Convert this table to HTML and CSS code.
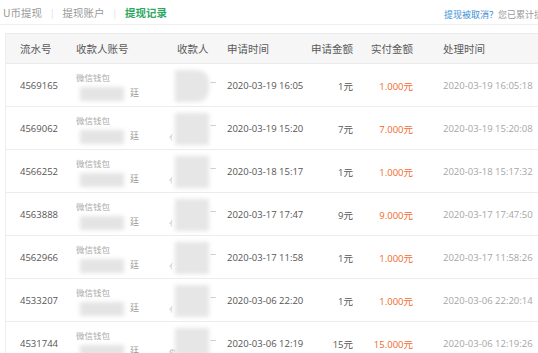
FILE: index.html
```html
<!DOCTYPE html>
<html lang="zh">
<head>
<meta charset="utf-8">
<link rel="stylesheet" href="styles.css">
</head>
<body>
<div class="page">
  <div class="tabs">
    <div class="tablist">
      <span class="tab">U币提现</span><span class="sep">|</span>
      <span class="tab">提现账户</span><span class="sep">|</span>
      <span class="tab active">提现记录</span>
    </div>
    <div class="note"><span class="link">提现被取消？</span>您已累计提现</div>
  </div>
  <div class="table">
    <div class="row head">
      <div class="c c1">流水号</div>
      <div class="c c2">收款人账号</div>
      <div class="c c3">收款人</div>
      <div class="c c4">申请时间</div>
      <div class="c c5">申请金额</div>
      <div class="c c6">实付金额</div>
      <div class="c c7">处理时间</div>
    </div>

    <div class="row">
      <div class="c c1 num">4569165</div>
      <div class="c c2 acct"><span class="wx">微信钱包</span><span class="l2"><span class="blob b1"></span><span class="ch">廷</span></span></div>
      <div class="c c3 name"><span class="blob b2 big"></span><span class="dash">—</span></div>
      <div class="c c4 num">2020-03-19 16:05</div>
      <div class="c c5 num">1元</div>
      <div class="c c6 num paid">1.000元</div>
      <div class="c c7 num done">2020-03-19 16:05:18</div>
    </div>
    <div class="row">
      <div class="c c1 num">4569062</div>
      <div class="c c2 acct"><span class="wx">微信钱包</span><span class="l2"><span class="blob b1"></span><span class="ch">廷</span></span></div>
      <div class="c c3 name"><span class="tiny">亻</span><span class="blob b2"></span><span class="dash">—</span></div>
      <div class="c c4 num">2020-03-19 15:20</div>
      <div class="c c5 num">7元</div>
      <div class="c c6 num paid">7.000元</div>
      <div class="c c7 num done">2020-03-19 15:20:08</div>
    </div>
    <div class="row">
      <div class="c c1 num">4566252</div>
      <div class="c c2 acct"><span class="wx">微信钱包</span><span class="l2"><span class="blob b1"></span><span class="ch">廷</span></span></div>
      <div class="c c3 name"><span class="tiny">亻</span><span class="blob b2"></span><span class="dash">—</span></div>
      <div class="c c4 num">2020-03-18 15:17</div>
      <div class="c c5 num">1元</div>
      <div class="c c6 num paid">1.000元</div>
      <div class="c c7 num done">2020-03-18 15:17:32</div>
    </div>
    <div class="row">
      <div class="c c1 num">4563888</div>
      <div class="c c2 acct"><span class="wx">微信钱包</span><span class="l2"><span class="blob b1"></span><span class="ch">廷</span></span></div>
      <div class="c c3 name"><span class="tiny">亻</span><span class="blob b2"></span><span class="dash">—</span></div>
      <div class="c c4 num">2020-03-17 17:47</div>
      <div class="c c5 num">9元</div>
      <div class="c c6 num paid">9.000元</div>
      <div class="c c7 num done">2020-03-17 17:47:50</div>
    </div>
    <div class="row">
      <div class="c c1 num">4562966</div>
      <div class="c c2 acct"><span class="wx">微信钱包</span><span class="l2"><span class="blob b1"></span><span class="ch">廷</span></span></div>
      <div class="c c3 name"><span class="tiny">亻</span><span class="blob b2"></span><span class="dash">—</span></div>
      <div class="c c4 num">2020-03-17 11:58</div>
      <div class="c c5 num">1元</div>
      <div class="c c6 num paid">1.000元</div>
      <div class="c c7 num done">2020-03-17 11:58:26</div>
    </div>
    <div class="row">
      <div class="c c1 num">4533207</div>
      <div class="c c2 acct"><span class="wx">微信钱包</span><span class="l2"><span class="blob b1"></span><span class="ch">廷</span></span></div>
      <div class="c c3 name"><span class="tiny">亻</span><span class="blob b2"></span><span class="dash">—</span></div>
      <div class="c c4 num">2020-03-06 22:20</div>
      <div class="c c5 num">1元</div>
      <div class="c c6 num paid">1.000元</div>
      <div class="c c7 num done">2020-03-06 22:20:14</div>
    </div>
    <div class="row">
      <div class="c c1 num">4531744</div>
      <div class="c c2 acct"><span class="wx">微信钱包</span><span class="l2"><span class="blob b1"></span><span class="ch">廷</span></span></div>
      <div class="c c3 name"><span class="tiny">俊</span><span class="blob b2"></span><span class="dash">—</span></div>
      <div class="c c4 num">2020-03-06 12:19</div>
      <div class="c c5 num">15元</div>
      <div class="c c6 num paid">15.000元</div>
      <div class="c c7 num done">2020-03-06 12:19:26</div>
    </div>
  </div>
</div>
</body>
</html>
```

FILE: styles.css
```css
html, body {
  margin: 0;
  padding: 0;
  background: #fff;
}
body {
  width: 538px;
  height: 353px;
  overflow: hidden;
  font-family: "Noto Sans CJK SC", "Open Sans", sans-serif;
  color: #666;
}
.page {
  width: 620px;
}
.tabs {
  width: 538px;
  height: 25px;
  box-sizing: border-box;
  border-bottom: 1px solid #f0f0f0;
  display: flex;
  justify-content: space-between;
  align-items: center;
  padding-left: 3px;
}
.tablist {
  display: flex;
  align-items: center;
  font-size: 10.5px;
  color: #999;
  line-height: 1;
  margin-top: 2px;
}
.tab { white-space: nowrap; }
.tab.active {
  color: #2fa863;
  font-weight: bold;
}
.sep {
  color: #ddd;
  font-size: 9px;
  margin: 0 9px;
}
.note {
  font-size: 9px;
  color: #999;
  white-space: nowrap;
  margin-right: -14px;
  margin-top: 4px;
}
.link { color: #3b8ed6; }
.table {
  margin-top: 8px;
  margin-left: 5px;
  border-left: 1px solid #eee;
  border-top: 1px solid #eaeaea;
}
.row {
  display: grid;
  grid-template-columns: 60px 101px 50px 83px 53px 60px 1fr;
  height: 43px;
  box-sizing: border-box;
  border-bottom: 1px solid #ececec;
  align-items: center;
}
.row.head {
  height: 30px;
  background: #f6f6f6;
  font-size: 10.5px;
  color: #5a5a5a;
  border-bottom: 1px solid #ebebeb;
}
.c { white-space: nowrap; }
.c1 { padding-left: 14px; }
.c2, .c3, .c4 { padding-left: 10px; }
.c5, .c6 { text-align: right; }
.c7 { padding-left: 30px; }
.num {
  font-family: "Open Sans", "Noto Sans CJK SC", sans-serif;
  font-size: 9.5px;
  color: #555;
}
.paid { color: #f2682a; }
.done { color: #a6a6a6; }
.acct {
  display: flex;
  flex-direction: column;
  align-self: stretch;
  padding-top: 6px;
  box-sizing: border-box;
}
.wx {
  font-size: 8.5px;
  color: #aaa;
  line-height: 14px;
}
.l2 {
  display: flex;
  align-items: center;
  height: 16px;
}
.blob {
  display: inline-block;
  background: #e4e4e4;
  filter: blur(2px);
}
.b1 {
  width: 44px;
  height: 14px;
  margin-left: 4px;
  margin-top: 3px;
}
.ch {
  font-size: 9px;
  color: #999;
  margin-left: 6px;
}
.name {
  display: flex;
  align-items: center;
  height: 43px;
  padding-left: 2px;
}
.tiny {
  font-size: 7px;
  color: #bbb;
  width: 6px;
  margin-top: 16px;
}
.b2 {
  width: 34px;
  height: 32px;
  background: #e6e6e6;
}
.b2.big {
  margin-left: 6px;
  border-radius: 0 12px 12px 0;
}
.dash {
  font-size: 7px;
  color: #999;
  margin-top: -10px;
  margin-left: 1px;
}
```
